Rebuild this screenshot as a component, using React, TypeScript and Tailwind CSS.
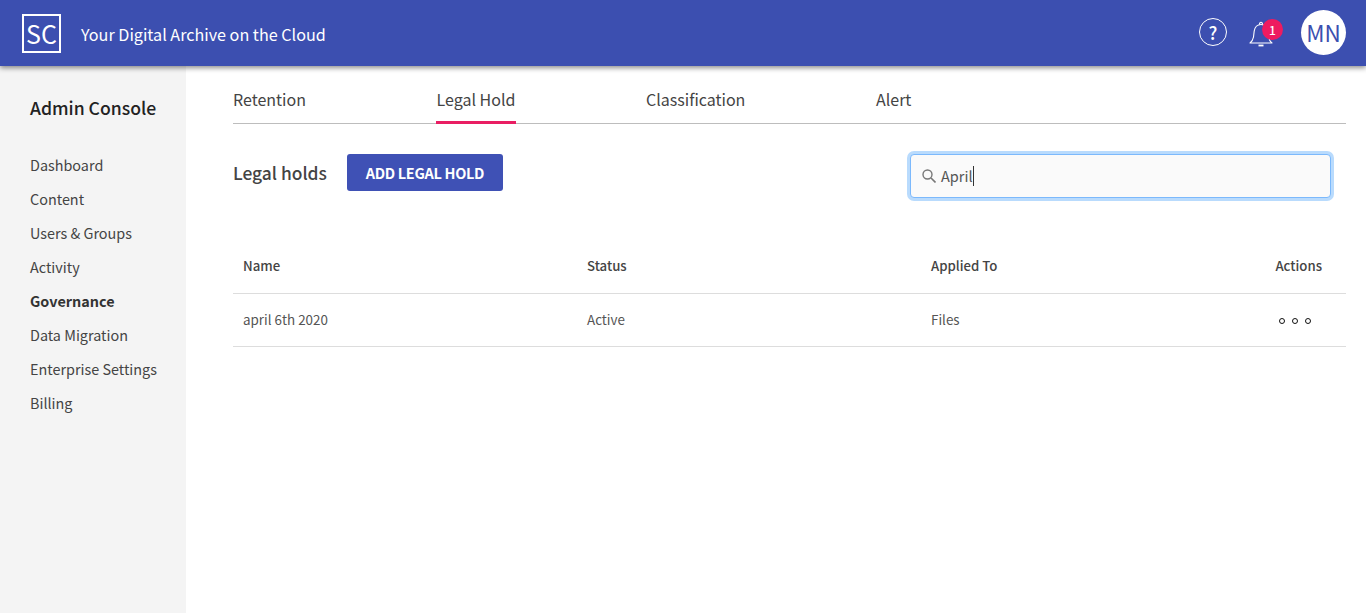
const menu = ['Dashboard', 'Content', 'Users & Groups', 'Activity', 'Governance', 'Data Migration', 'Enterprise Settings', 'Billing'];

const tabs = [
  { label: 'Retention', width: 'w-[203px]' },
  { label: 'Legal Hold', width: 'w-[210px]' },
  { label: 'Classification', width: 'w-[230px]' },
  { label: 'Alert', width: 'w-[60px]' },
];

export default function App() {
  return (
    <div className="flex h-[613px] flex-col overflow-hidden bg-white font-['Noto_Sans_CJK_SC',sans-serif] text-[#333]">
      {/* Header */}
      <header className="relative z-10 flex h-[66px] shrink-0 items-center justify-between bg-[#3c4fb0] pl-[22px] pr-[20px] shadow-[0_2px_5px_rgba(0,0,0,0.45)]">
        <div className="flex items-center">
          <div className="flex h-[39px] w-[39px] items-center justify-center border-2 border-white text-[25px] leading-none text-white">
            SC
          </div>
          <span className="ml-[20px] mt-[2px] text-[16.15px] leading-6 text-white">Your Digital Archive on the Cloud</span>
        </div>
        <div className="mb-[2px] flex items-center">
          <div className="flex h-[28px] w-[28px] -translate-x-px items-center justify-center rounded-full border-[1.5px] border-white text-[18px] font-medium leading-none text-white">
            ?
          </div>
          <div className="relative ml-[21px] mr-[28px] h-[28px] w-[24px]">
            <svg width="24" height="26" viewBox="0 0 24 26" fill="none" stroke="white" strokeWidth="1.1" className="mt-[3px]">
              <path d="M1 22c2-1.500 3-3 3.500-6l.7-6c.5-3.500 3-6.500 6.800-6.500s6.300 3 6.800 6.500l.7 6c.5 3 1.500 4.500 3.500 6z" strokeLinejoin="round" />
              <path d="M10.500 3.500c0-3 3-3 3 0" />
              <path d="M9.500 24.500h5" strokeWidth="1.800" />
            </svg>
            <span className="absolute left-[13px] top-[1px] flex h-[21px] w-[21px] items-center justify-center rounded-full bg-[#ee1b60] text-[12px] font-medium leading-none text-white">
              1
            </span>
          </div>
          <div className="flex h-[45px] w-[45px] items-center justify-center rounded-full bg-white text-[22.5px] leading-none text-[#3c4fb0]">
            MN
          </div>
        </div>
      </header>

      <div className="flex flex-1">
        {/* Sidebar */}
        <aside className="w-[186px] shrink-0 bg-[#f4f4f4] pl-[30px] pt-[28px]">
          <h1 className="text-[17.6px] font-medium leading-[28px] text-[#222]">Admin Console</h1>
          <ul className="mt-[26px]">
            {menu.map((item) => (
              <li key={item} className={`h-[34px] text-[14.4px] leading-[34px] ${item === 'Governance' ? 'font-bold text-[#333]' : 'text-[#444]'}`}>
                {item}
              </li>
            ))}
          </ul>
        </aside>

        {/* Main Content */}
        <main className="flex-1 pl-[47px] pr-[20px]">
          <nav className="flex h-[58px] border-b border-[#bdbdbd]">
            {tabs.map((tab) => (
              <div key={tab.label} className={`${tab.width} pt-[21px]`}>
                <span
                  className={`-mb-px inline-block h-[37px] text-[16px] leading-6 text-[#444] ${
                    tab.label === 'Legal Hold' ? 'w-[80px] border-b-[3px] border-[#e91e63] text-center' : ''
                  }`}
                >
                  {tab.label}
                </span>
              </div>
            ))}
          </nav>

          <div className="mt-[30px] flex items-start justify-between pr-[15px]">
            <div className="flex items-center">
              <h2 className="text-[17.4px] font-medium leading-[37px] text-[#444]">Legal holds</h2>
              <button className="ml-[20px] h-[37px] w-[156px] rounded-[3px] bg-[#3f51b5] text-[14.5px] font-bold tracking-[-0.3px] text-white">
                ADD LEGAL HOLD
              </button>
            </div>
            <div className="flex h-[44px] w-[421px] items-center rounded-[4px] border border-[#7cb9fc] bg-[#fafafa] pl-[11px] shadow-[0_0_0_3px_#b9dbfd]">
              <svg width="14" height="14" viewBox="0 0 14 14" fill="none" stroke="#777" strokeWidth="1.4">
                <circle cx="5.5" cy="5.5" r="4.5" />
                <path d="M9 9l4.500 4.500" strokeWidth="1.600" />
              </svg>
              <span className="ml-[5px] border-r border-[#333] text-[14.5px] leading-[20px] text-[#555]">April</span>
            </div>
          </div>

          {/* Table */}
          <div className="mt-[40px] text-[13.4px]">
            <div className="flex h-[56px] items-center border-b border-[#ddd] pl-[10px] pr-[24px] text-[13.2px] font-medium text-[#444]">
              <span className="w-[344px]">Name</span>
              <span className="w-[344px]">Status</span>
              <span className="flex-1">Applied To</span>
              <span>Actions</span>
            </div>
            <div className="flex h-[53px] items-center border-b border-[#ddd] pb-[2px] pl-[10px] pr-[35px] text-[#555]">
              <span className="w-[344px]">april 6th 2020</span>
              <span className="w-[344px]">Active</span>
              <span className="flex-1">Files</span>
              <div className="mt-[4px] flex gap-[7px]">
                <span className="h-[6px] w-[6px] rounded-full border-[1.5px] border-[#111]" />
                <span className="h-[6px] w-[6px] rounded-full border-[1.5px] border-[#111]" />
                <span className="h-[6px] w-[6px] rounded-full border-[1.5px] border-[#111]" />
              </div>
            </div>
          </div>
        </main>
      </div>
    </div>
  );
}
